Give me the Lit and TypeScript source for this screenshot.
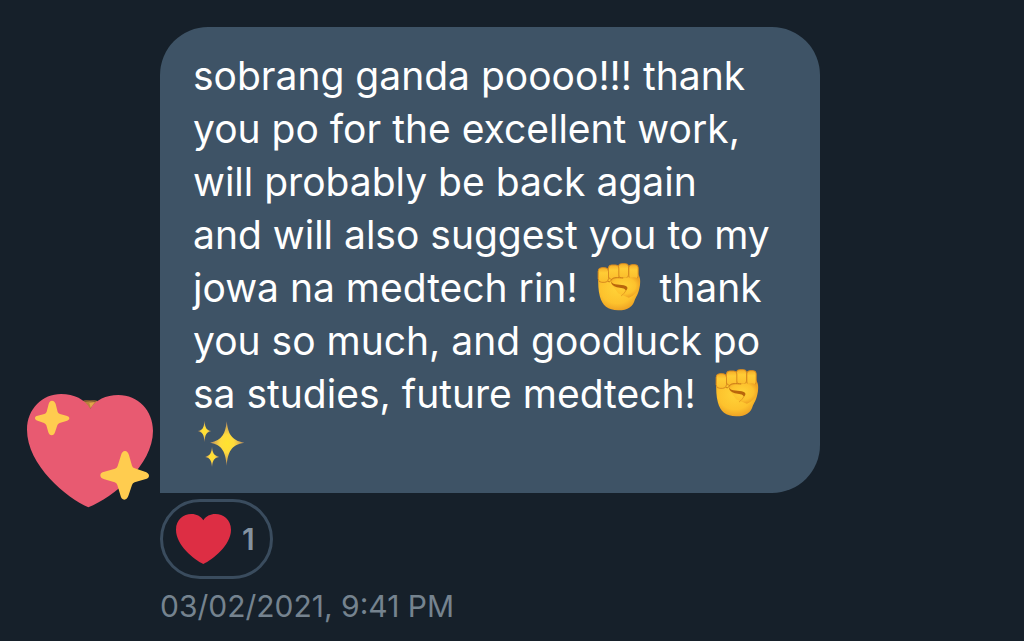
import { LitElement, html, css, svg } from "lit";
import { customElement, property, state } from "lit/decorators.js";

@customElement("emoji-icon")
export class EmojiIcon extends LitElement {
  @property() name = "fist";

  static styles = css`
    :host { display: inline-block; }
    svg { display: block; width: 100%; height: 100%; }
  `;

  private fist() {
    return svg`
      <defs>
        <radialGradient id="skin" cx="0.45" cy="0.42" r="0.62">
          <stop offset="0" stop-color="#ffd338" />
          <stop offset="0.65" stop-color="#fdc22d" />
          <stop offset="1" stop-color="#eb9c22" />
        </radialGradient>
        <linearGradient id="finger" x1="0" y1="0" x2="0" y2="1">
          <stop offset="0" stop-color="#f4ac29" />
          <stop offset="0.35" stop-color="#ffcc35" />
          <stop offset="1" stop-color="#fbbd2c" />
        </linearGradient>
      </defs>
      <path fill="url(#skin)" d="M38 62C38 50 50 48 66 50L150 50C163 56 166 72 163 90C160 112 153 121 148 132C143 152 128 164 98 164C67 164 50 150 43 122C38 103 38 84 38 62Z" />
      <g fill="url(#finger)" stroke="#d88b1f" stroke-width="3">
        <rect x="130" y="27" width="28" height="43" rx="9" />
        <rect x="99" y="24" width="30" height="43" rx="9" />
        <rect x="69" y="28" width="31" height="43" rx="9" />
        <rect x="38" y="36" width="31" height="44" rx="11" />
      </g>
      <path fill="url(#skin)" d="M77 73C80 64 91 64 104 66L145 65C160 66 164 76 162 88C158 106 147 120 130 126L98 113L78 86Z" />
      <path fill="none" stroke="#c87717" stroke-width="3" stroke-linecap="round" d="M69 78C74 80 75 76 78 72C84 64 97 66 112 67" />
      <path fill="#b9660c" d="M76 77C83 91 106 85 121 91C127 94 128 99 121 105C118 97 106 98 94 95C83 92 77 86 76 77Z" />
      <path fill="none" stroke="#e39a20" stroke-width="3" stroke-linecap="round" d="M121 105C117 112 113 116 108 120" />`;
  }

  private sparkles() {
    return svg`
      <defs>
        <radialGradient id="glow">
          <stop offset="0" stop-color="#ffe32f" />
          <stop offset="0.4" stop-color="#ffdb3c" />
          <stop offset="1" stop-color="#b98a62" />
        </radialGradient>
      </defs>
      <g fill="url(#glow)">
        <path d="M127 18C131 55 140 76 181 84C140 91 131 112 127 154C123 112 114 91 76 84C114 76 123 55 127 18Z" />
        <path d="M59 16C61 37 64 45 80 48C64 51 61 60 59 81C57 60 54 51 38 48C54 45 57 37 59 16Z" />
        <path d="M82 96C84 115 87 123 104 127C87 130 84 139 82 158C80 139 77 130 61 127C77 123 80 115 82 96Z" />
      </g>`;
  }

  private heart() {
    return svg`<path fill="#dd2e44" d="M160 240C132 226 78 184 78 137C78 88 139 75 160 109C181 75 243 88 243 137C243 184 188 226 160 240Z" />`;
  }

  private sparklingHeart() {
    return svg`
      <path fill="#b9813c" d="M216 62Q240 56 264 62L241 86Z" />
      <path fill="#6f4b2b" d="M222 61Q240 57 258 61L256 64Q240 61 224 64Z" />
      <path fill="#e3a64a" d="M238 68L254 66L242 82Z" />
      <path fill="#e85a71" d="M235 381C170 352 51 254 51 148C51 85 98 41 153 41C193 41 224 57 241 85C258 59 287 44 325 44C384 44 429 91 429 151C429 255 310 350 235 381Z" />
      <g fill="#ffcc4f">
        <path d="M126 61C132 61 135 65 137 71L143 95Q145 100 150 101L169 106C175 108 178 110 178 114C178 118 175 120 169 122L149 128Q143 130 142 135L135 156C133 162 130 165 125 165C120 165 117 162 115 156L109 135Q107 130 102 128L83 121C77 119 75 117 75 113C75 109 78 107 83 106L103 101Q108 99 110 94L116 71C118 65 120 61 126 61Z" />
        <path d="M345 212C351 212 355 217 357 225L366 256Q368 262 374 264L405 274C413 277 417 280 417 286C417 292 413 295 405 297L374 306Q368 308 366 314L356 344C353 353 349 358 343 358C337 358 333 353 331 344L322 314Q320 308 314 306L283 297C275 294 271 291 271 285C271 279 275 276 283 274L315 265Q321 263 323 257L333 225C335 217 339 212 345 212Z" />
      </g>`;
  }

  render() {
    switch (this.name) {
      case "sparkles":
        return html`<svg viewBox="36 14 147 147" role="img" aria-label="sparkles">${this.sparkles()}</svg>`;
      case "heart":
        return html`<svg viewBox="78 90 165 150" role="img" aria-label="red heart">${this.heart()}</svg>`;
      case "sparkling-heart":
        return html`<svg viewBox="48 38 384 345" role="img" aria-label="sparkling heart">${this.sparklingHeart()}</svg>`;
      default:
        return html`<svg viewBox="30 22 141 144" role="img" aria-label="raised fist">${this.fist()}</svg>`;
    }
  }
}

@customElement("app-root")
export class AppRoot extends LitElement {
  @state() private reactions = 1;

  static styles = css`
    :host {
      display: block;
      min-height: 100vh;
      box-sizing: border-box;
      padding: 27px 24px 0 26px;
      background: #16202a;
      color: #fff;
      font-family: Inter, "Liberation Sans", sans-serif;
      overflow: hidden;
    }
    .message { display: flex; align-items: flex-end; gap: 6px; }
    .avatar { flex: none; width: 128px; height: 115px; margin-bottom: 116px; }
    .content { display: flex; flex-direction: column; align-items: flex-start; min-width: 0; }
    .bubble {
      box-sizing: border-box;
      max-width: 660px;
      padding: 22px 33px 20px;
      border-radius: 48px 48px 48px 0;
      background: #3e5366;
    }
    .text { margin: 0; width: 594px; max-width: 100%; font-size: 39px; line-height: 53px; }
    .fist { width: 48px; height: 48px; margin: 0 6px; vertical-align: -9px; }
    .sparkles { width: 48px; height: 48px; margin: 0 4px; vertical-align: -7px; }
    .reaction {
      display: flex;
      align-items: center;
      gap: 11px;
      height: 80px;
      margin: 6px 0 0;
      padding: 0 15px 0 13px;
      border: 3px solid #3a4c5e;
      border-radius: 40px;
      background: transparent;
      color: #8493a0;
      font: 600 30px/36px Inter, "Liberation Sans", sans-serif;
    }
    .heart { width: 55px; height: 50px; }
    .time { margin-top: 9px; color: #75838f; font-size: 30px; line-height: 36px; }
  `;

  render() {
    const fist = html`<emoji-icon class="fist" name="fist"></emoji-icon>`;
    return html`
      <article class="message">
        <emoji-icon class="avatar" name="sparkling-heart"></emoji-icon>
        <div class="content">
          <div class="bubble">
            <p class="text">
              sobrang ganda poooo!!! thank<br />
              you po for the excellent work,<br />
              will probably be back again<br />
              and will also suggest you to my<br />
              jowa na medtech rin! ${fist} thank<br />
              you so much, and goodluck po<br />
              sa studies, future medtech! ${fist}<br />
              <emoji-icon class="sparkles" name="sparkles"></emoji-icon>
            </p>
          </div>
          <button class="reaction" type="button" aria-label="Heart reactions: ${this.reactions}">
            <emoji-icon class="heart" name="heart"></emoji-icon>
            <span>${this.reactions}</span>
          </button>
          <time class="time" datetime="2021-03-02T21:41">03/02/2021, 9:41 PM</time>
        </div>
      </article>
    `;
  }
}
